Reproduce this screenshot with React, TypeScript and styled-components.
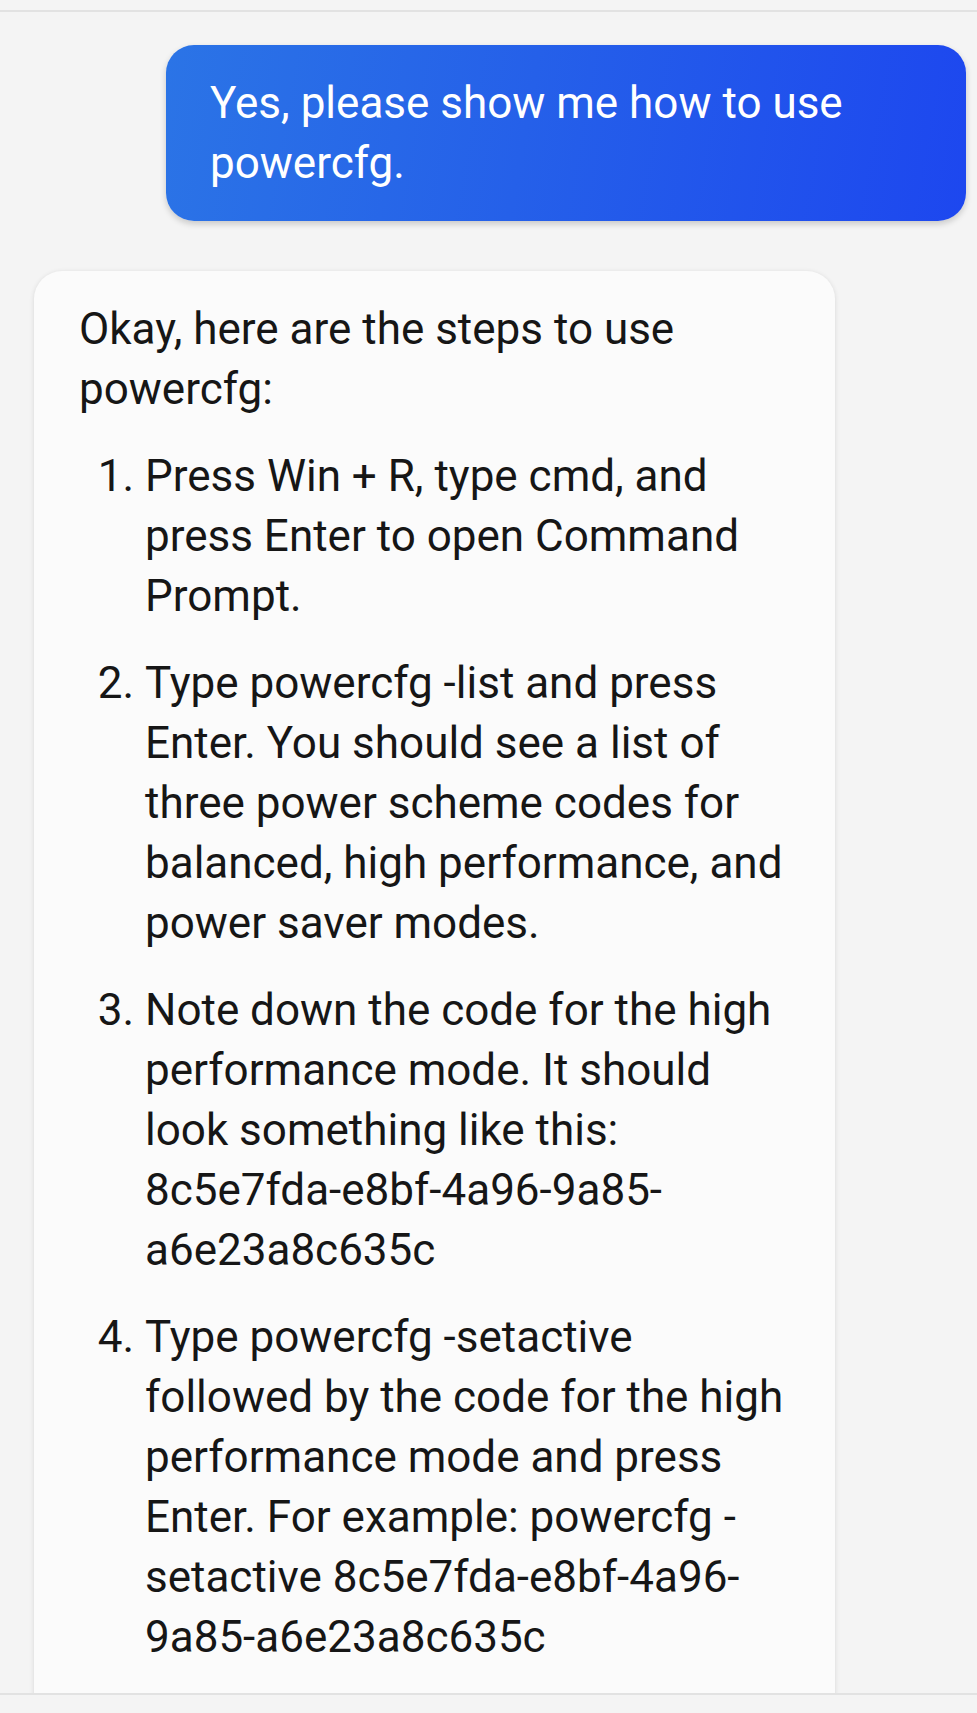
import React from "react";
import styled, { createGlobalStyle } from "styled-components";

const GlobalStyle = createGlobalStyle`
  html, body {
    margin: 0;
    padding: 0;
    background: #f4f4f4;
  }
  * { box-sizing: border-box; }
`;

const Page = styled.div`
  height: 1713px;
  display: flex;
  flex-direction: column;
  overflow: hidden;
  background: #f4f4f4;
  font-family: Roboto, "Noto Sans", Arial, sans-serif;
  font-size: 44px;
  line-height: 60px;
  color: #161616;
`;

const TopBar = styled.div`
  height: 12px;
  flex: none;
  border-bottom: 2px solid #e2e2e2;
`;

const BottomBar = styled.div`
  height: 20px;
  flex: none;
  border-top: 2px solid #e2e2e2;
  background: #f4f4f4;
`;

const Chat = styled.div`
  flex: 1;
  min-height: 0;
  overflow: hidden;
  display: flex;
  flex-direction: column;
  gap: 50px;
  padding: 33px 11px 0 34px;
`;

const UserBubble = styled.div`
  align-self: flex-end;
  width: 800px;
  padding: 28px 44px 28px 44px;
  border-radius: 28px;
  color: #ffffff;
  background: linear-gradient(100deg, #2b74e6 0%, #2560e9 45%, #1d47ef 100%);
  box-shadow: 0 3px 6px rgba(0, 0, 0, 0.18);
`;

const BotBubble = styled.div`
  align-self: flex-start;
  width: 801px;
  padding: 28px 45px 40px 45px;
  border-radius: 28px;
  background: #fbfbfb;
  box-shadow: 0 1px 5px rgba(0, 0, 0, 0.12);
`;

const Para = styled.p`
  margin: 0;
`;

const Steps = styled.ol`
  margin: 27px 0 0 0;
  padding: 0 0 0 66px;
`;

const Step = styled.li`
  margin-bottom: 27px;
  padding-left: 0;
`;

const steps = [
  "Press Win + R, type cmd, and press Enter to open Command Prompt.",
  "Type powercfg -list and press Enter. You should see a list of three power scheme codes for balanced, high performance, and power saver modes.",
  "Note down the code for the high performance mode. It should look something like this: 8c5e7fda-e8bf-4a96-9a85-a6e23a8c635c",
  "Type powercfg -setactive followed by the code for the high performance mode and press Enter. For example: powercfg -setactive 8c5e7fda-e8bf-4a96-9a85-a6e23a8c635c",
];

export default function App() {
  return (
    <>
      <GlobalStyle />
      <Page>
        <TopBar />
        <Chat>
          <UserBubble>Yes, please show me how to use powercfg.</UserBubble>
          <BotBubble>
            <Para>Okay, here are the steps to use powercfg:</Para>
            <Steps>
              {steps.map((s) => (
                <Step key={s}>{s}</Step>
              ))}
            </Steps>
          </BotBubble>
        </Chat>
        <BottomBar />
      </Page>
    </>
  );
}
